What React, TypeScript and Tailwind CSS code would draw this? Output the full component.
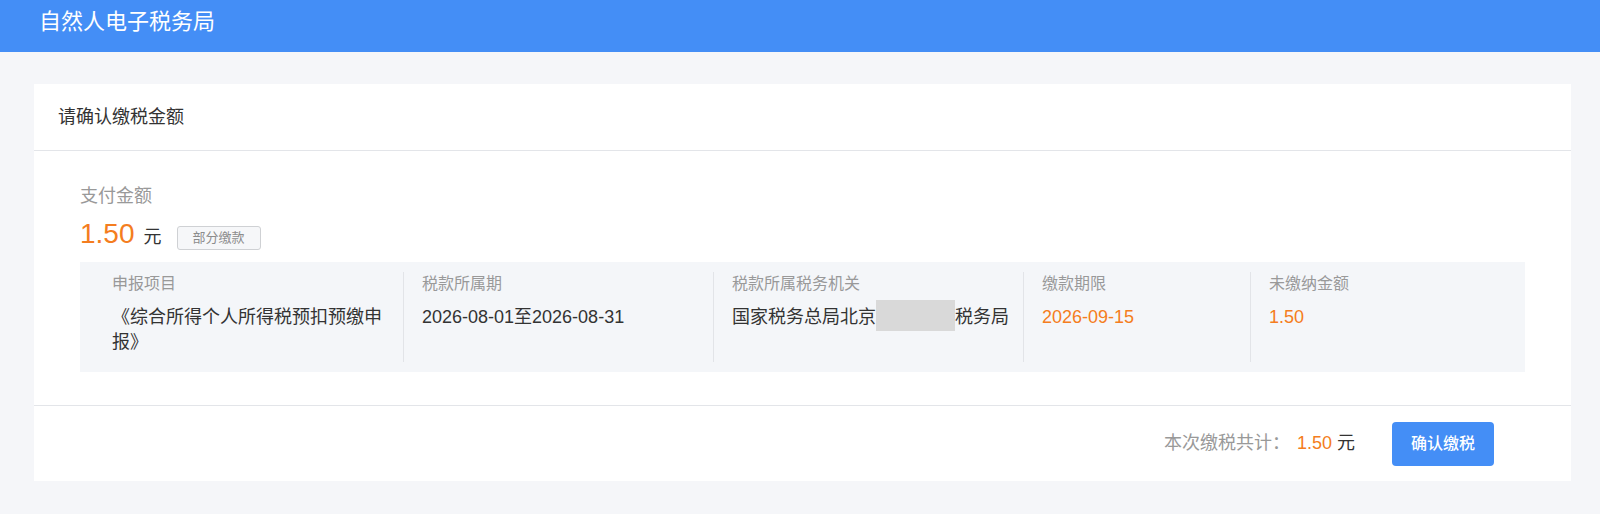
const columns = [
  { label: "申报项目", width: "w-[323px]", first: true },
  { label: "税款所属期", width: "w-[310px]" },
  { label: "税款所属税务机关", width: "w-[310px]" },
  { label: "缴款期限", width: "w-[227px]" },
  { label: "未缴纳金额", width: "flex-1" },
];

const font = "font-['Liberation_Sans','Noto_Sans_CJK_SC',sans-serif]";

export default function App() {
  return (
    <div className={`min-h-[514px] bg-[#f5f6f9] ${font}`}>
      <header className="flex h-[52px] items-center bg-[#448ef6] pb-2 pl-[39px]">
        <h1 className="text-[22px] leading-[30px] text-white">自然人电子税务局</h1>
      </header>

      <main className="pt-8">
        <section className="ml-[34px] w-[1537px] bg-white">
          <div className="flex h-[67px] items-center border-b border-[#e3e5e9] pl-[24px]">
            <h2 className="text-[18px] leading-[26px] text-[#333]">请确认缴税金额</h2>
          </div>

          <div className="px-[46px] pb-[33px] pt-[32px]">
            <p className="text-[18px] leading-[26px] text-[#999]">支付金额</p>
            <div className="mt-[7px] flex h-[36px] items-center">
              <div className="flex items-baseline">
                <span className="text-[28px] leading-[36px] text-[#f47d20]">1.50</span>
                <span className="ml-[9px] text-[18px] text-[#333]">元</span>
              </div>
              <span className="ml-[15px] mt-2 flex h-[24px] w-[84px] items-center justify-center rounded-[3px] border border-[#cfd1d4] bg-[#f6f7f9] text-[13px] text-[#8c8c8c]">
                部分缴款
              </span>
            </div>

            <div className="mt-[10px] flex h-[110px] bg-[#f4f6f9] py-[10px]">
              {columns.map((col, i) => (
                <div
                  key={col.label}
                  className={`${col.width} ${
                    col.first ? "pl-[32px] pr-[20px]" : "border-l border-[#e2e4e8] pl-[18px]"
                  } pt-px`}
                >
                  <p className="text-[16px] leading-[22px] text-[#999]">{col.label}</p>
                  <div className="mt-[10px] text-[18px] leading-[25px] text-[#333]">
                    {i === 0 && <p>《综合所得个人所得税预扣预缴申报》</p>}
                    {i === 1 && <p>2026-08-01至2026-08-31</p>}
                    {i === 2 && (
                      <p className="flex h-[25px] items-center whitespace-nowrap">
                        <span className="shrink-0">国家税务总局北京</span>
                        <span className="h-[31px] w-[79px] shrink-0 -translate-y-[2px] bg-[#d9d9d9]" />
                        <span className="shrink-0">税务局</span>
                      </p>
                    )}
                    {i === 3 && <p className="text-[#f47d20]">2026-09-15</p>}
                    {i === 4 && <p className="text-[#f47d20]">1.50</p>}
                  </div>
                </div>
              ))}
            </div>
          </div>

          <div className="flex h-[76px] items-center justify-end border-t border-[#e3e5e9] pr-[77px]">
            <span className="text-[18px] text-[#999]">本次缴税共计：</span>
            <span className="ml-[7px] text-[18px] text-[#f47d20]">1.50</span>
            <span className="ml-[5px] text-[18px] text-[#333]">元</span>
            <button className="ml-[37px] h-[44px] w-[102px] rounded-[4px] bg-[#448ef6] text-[16px] font-medium text-white">
              确认缴税
            </button>
          </div>
        </section>
      </main>
    </div>
  );
}
